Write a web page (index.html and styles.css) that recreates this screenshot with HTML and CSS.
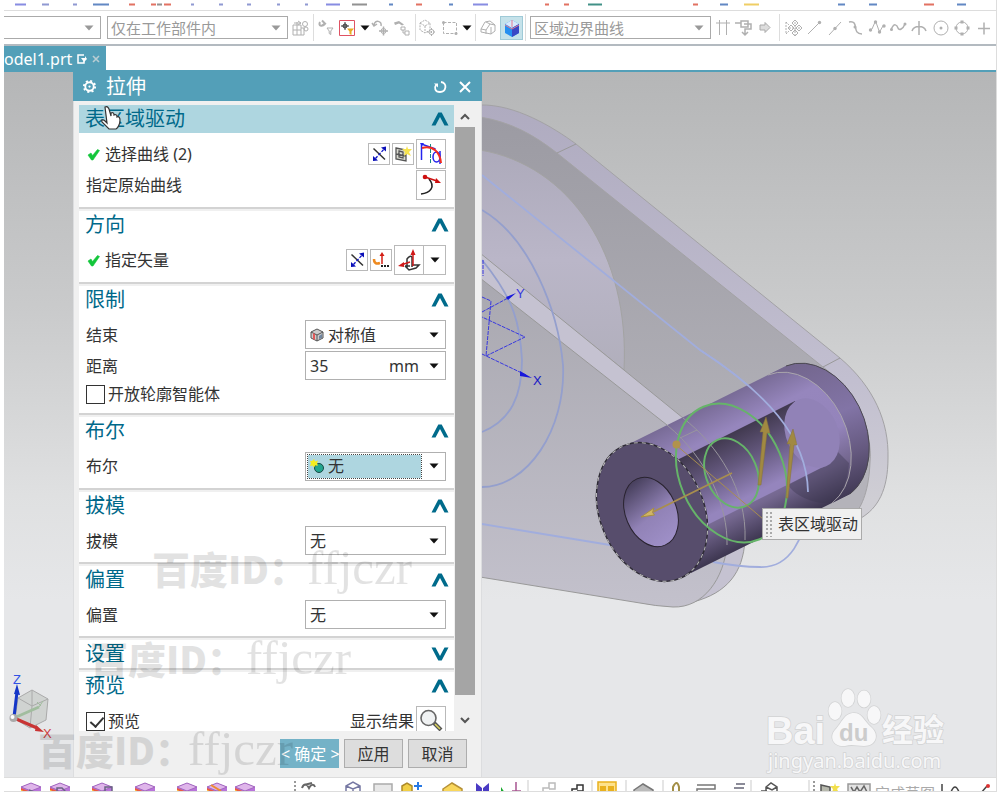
FILE: index.html
```html
<!DOCTYPE html>
<html lang="zh-CN">
<head>
<meta charset="utf-8">
<meta name="viewport" content="width=device-width, initial-scale=1">
<title>model1.prt - 拉伸</title>
<link rel="stylesheet" href="styles.css">
</head>
<body>
<svg width="0" height="0" class="defs" aria-hidden="true">
  <symbol id="down" viewBox="0 0 10 6"><path d="M0.500 0.500h9L5 5.500z" fill="currentColor"/></symbol>
  <symbol id="chev" viewBox="0 0 18 14"><path d="M0.500 13.500L7.300.500h3.400l6.800 13h-4L9 5 4.500 13.500z" fill="#006b8b"/></symbol>
  <symbol id="tick" viewBox="0 0 13 13"><path d="M1 7l3-2L5.500 7.500 10.500 1.500 12.500 2.500 6 12 4.500 12z" fill="#12c63a" stroke="#12c63a" stroke-width=".6"/></symbol>
  <symbol id="reverse" viewBox="0 0 20 20"><path d="M4.500 4.500l11.500 11" stroke="#333" stroke-width="1.500"/><path d="M6.500 14.500l9-10" stroke="#0b10c8" stroke-width="1.300" stroke-dasharray="3 1.500"/><path d="M4 17v-5l5 4.500zM17 2.500v5l-5-4z" fill="#0b10b8"/></symbol>
</svg>
<div class="app">
  <svg class="strip" viewBox="0 0 992 10" preserveAspectRatio="xMinYMin slice" aria-hidden="true">
    <g transform="translate(-4 0)" stroke-width="2" fill="none" opacity=".8">
      <path d="M15 4.500h11M326 4.500h14M473 4.500h15" stroke="#6b70dc"/>
      <path d="M42 4.500h7M73 4.500h4M191 4.500h3M219 4.500h4M247 4.500h4M277 4.500h3M305 4.500h3" stroke="#7580c8"/>
      <path d="M93 4.500h16M389 4.500h4M449 4.500h4M720 4.500h8M838 4.500h7M869 4.500h8M957 4.500h9" stroke="#3b6bb5"/>
      <path d="M129 4.500h6M151 4.500h5M164 4.500h7M416 4.500h6M545 4.500h4M564 4.500h5M693 4.500h5M924 4.500h10" stroke="#db4f3c"/>
      <path d="M157 4.500h5M352 4.500h15" stroke="#777"/><path d="M744 4.500h15" stroke="#ecc33e"/><path d="M588 4.500h14" stroke="#12766a"/>
    </g>
  </svg>
  <div class="toolbar">
    <div class="pick pick-first"><select aria-label="类型过滤器"><option></option></select><svg class="pick-arrow"><use href="#down"/></svg></div>
    <div class="pick pick-wide"><select aria-label="选择范围"><option>仅在工作部件内</option></select><svg class="pick-arrow"><use href="#down"/></svg></div>
    <div class="tools">
      <button class="tool" aria-label="装配范围"><svg viewBox="0 0 20 20"><path d="M3 7h8v10H3zM3 12h8M7 4v13M4 5h7M8 3l3 2-3 2M11 10h3v7h-3" class="g"/><circle cx="15" cy="6" r="2.500" class="g"/><circle cx="16" cy="11" r="2" class="g"/></svg></button>
      <i class="sep"></i>
      <button class="tool" aria-label="重置过滤器"><svg viewBox="0 0 20 20"><path d="M4 4c-2 4 2 5 5 2M6 2.500l3 3-3 2" class="g" stroke-width="2"/><path d="M11 10h6l-2.200 3v3.500l-1.600-1V13z" class="g"/></svg></button>
      <button class="tool" aria-label="点过滤器"><svg viewBox="0 0 20 20"><path d="M2.500 2.500h15v15h-15z" fill="#fff" stroke="#df5263"/><path d="M4 8h8M8 4v8" stroke="#333"/><circle cx="8" cy="8" r="2" fill="none" stroke="#333"/><path d="M10 10.500h7l-2.500 3V17l-2-1v-2.500z" fill="#eaac23"/></svg></button>
      <button class="caret" aria-label="更多过滤器"><svg class="mini"><use href="#down"/></svg></button>
      <button class="tool" aria-label="撤销选择"><svg viewBox="0 0 20 20"><path d="M3 7c1-6 8-4 7 1M1 5l2 3 3-2M8 13h9M12.500 8.500v9" class="g" stroke-width="1.500"/><circle cx="12.500" cy="13" r="2.500" class="g"/></svg></button>
      <button class="tool" aria-label="对象导航"><svg viewBox="0 0 20 20"><path d="M2 4.500l5-1.500 5 3.500-2 1-3-2-4 1.500z" class="gf"/><path d="M9 9h4v3H9zM13 13h4v4h-4zM11 12v3h2" class="g"/></svg></button>
      <i class="sep"></i>
      <button class="tool" aria-label="实体选择"><svg viewBox="0 0 20 20"><path d="M2 5l5-3 5 3v7l-5 3-5-3zl5 3 5-3M7 8v7M9 14h9M13.500 10v8" class="g" stroke-dasharray="2 1"/><circle cx="13.500" cy="14" r="2.500" class="g"/></svg></button>
      <button class="tool" aria-label="矩形选择"><svg viewBox="0 0 20 20"><path d="M4.500 4.500h13v11h-13z" class="g" stroke-dasharray="3 1.500"/><circle cx="4.500" cy="4.500" r="1.500" class="gf"/><circle cx="17" cy="15.500" r="1.500" class="gf"/></svg></button>
      <button class="caret" aria-label="选择方式"><svg class="mini"><use href="#down"/></svg></button>
      <i class="sep"></i>
      <button class="tool" aria-label="隐藏边"><svg viewBox="0 0 20 20"><path d="M3 11l4-7 5-1 5 4v6l-4 3-5-1-5-1zM3 11l5 1 4-6 5 1M8 12v4M12 6l-4-2M13 16V9" class="g"/></svg></button>
      <button class="tool tool-on" aria-label="着色"><svg viewBox="0 0 20 20"><path d="M3 6l7-4 7 4v9l-7 4-7-4z" fill="#258ff0"/><path d="M3 6l7-4 7 4-7 4z" fill="#d9e8fb"/><path d="M10 10l7-4v9l-7 4z" fill="#3a47c5"/><path d="M3 7l7 4 7-4M10 2v7" stroke="#e37b91" fill="none"/></svg></button>
      <i class="sep"></i>
    </div>
    <div class="pick pick-wide"><select aria-label="曲线规则"><option>区域边界曲线</option></select><svg class="pick-arrow"><use href="#down"/></svg></div>
    <div class="tools">
      <button class="tool" aria-label="在相交处停止"><svg viewBox="0 0 20 20"><path d="M3 5h14M6.500 2v15M13.500 2v15" class="g"/></svg></button>
      <button class="tool" aria-label="跟随圆角"><svg viewBox="0 0 20 20"><path d="M1 5h6M7 3h7v6H7zM10 6h7v5h-6v5M8 14l3 3 3-3" class="g" stroke-width="1.500"/></svg></button>
      <button class="tool" aria-label="特征内的链"><svg viewBox="0 0 20 20"><path d="M5 7h5V4.500l5 5-5 5V12H5z" fill="#ddd" stroke="#aaa"/></svg></button>
      <i class="sep sep-wide"></i>
      <button class="tool" aria-label="启用捕捉点"><svg viewBox="0 0 20 20"><path d="M3 4v12M3 4l3 3M3 16l3-3M6 10h13M12 4v13" class="g" stroke-dasharray="2 1"/><path d="M12 2l3 3-3 3-3-3zM12 12l3 3-3 3-3-3zM8 7l3 3-3 3-3-3zM16 7l3 3-3 3-3-3z" class="g"/></svg></button>
      <button class="tool" aria-label="端点"><svg viewBox="0 0 20 20"><path d="M4 16L15 5" class="g"/><circle cx="15.500" cy="4.500" r="1.700" class="gf"/></svg></button>
      <button class="tool" aria-label="中点"><svg viewBox="0 0 20 20"><path d="M4 17L16 4" class="g"/><circle cx="10" cy="10.500" r="1.700" class="gf"/></svg></button>
      <button class="tool" aria-label="控制点"><svg viewBox="0 0 20 20"><path d="M3 4c11-2 2 12 13 12" class="g" stroke-width="1.500"/><circle cx="9" cy="9" r="1.500" class="gf"/></svg></button>
      <button class="tool" aria-label="极点"><svg viewBox="0 0 20 20"><path d="M3 12l2-1 3.500-8 4 11 4-7" class="g"/><circle cx="3.500" cy="12" r="1.700" class="gf"/><circle cx="8.500" cy="4" r="1.700" class="gf"/><circle cx="12.500" cy="14" r="1.700" class="gf"/><circle cx="17" cy="8" r="1.700" class="gf"/></svg></button>
      <button class="tool" aria-label="样条点"><svg viewBox="0 0 20 20"><path d="M3 12c3-8 6-5 7-2s5 1 7-4" class="g" stroke-width="1.500"/><circle cx="3.500" cy="11.500" r="1.500" class="gf"/><circle cx="17" cy="6" r="1.500" class="gf"/></svg></button>
      <button class="tool" aria-label="交点"><svg viewBox="0 0 20 20"><path d="M3 13c2-6 12-6 14 0M10 3v14" class="g" stroke-width="1.500"/></svg></button>
      <button class="tool" aria-label="圆心"><svg viewBox="0 0 20 20"><circle cx="11" cy="10" r="7" class="g"/><circle cx="11" cy="10" r="1.500" class="gf"/></svg></button>
      <button class="tool" aria-label="象限点"><svg viewBox="0 0 20 20"><circle cx="11" cy="10" r="6" class="g"/><path d="M9.500 2.500h3v3h-3zM9.500 14.500h3v3h-3zM3.500 8.500h3v3h-3zM15.500 8.500h3v3h-3z" class="gf"/></svg></button>
      <button class="tool" aria-label="现有点"><svg viewBox="0 0 20 20"><path d="M6 10.500h12M12 4.500v12" class="g" stroke-width="1.500"/></svg></button>
    </div>
  </div>
  <div class="tabs">
    <div class="tab"><span class="tab-name">odel1.prt</span>
      <svg class="tab-icon" viewBox="0 0 10 10"><path d="M7 1H1v8h6V7" fill="none" stroke="#fff" stroke-width="1.500"/><path d="M4 4h4V2l2 3-3 3z" fill="#fff"/></svg>
      <button class="tab-close" aria-label="关闭"><svg viewBox="0 0 8 8"><path d="M1 1l6 6M7 1L1 7" stroke="#b9cdd3" stroke-width="1.600"/></svg></button>
    </div>
  </div>
  <main class="viewport">
    <svg class="scene" viewBox="0 0 992 705" preserveAspectRatio="xMinYMin slice" aria-label="模型视图">
      <defs>
        <linearGradient id="face" gradientUnits="userSpaceOnUse" x1="0" y1="120" x2="0" y2="480"><stop offset="0" stop-color="#9c9ba3"/><stop offset="1" stop-color="#b4b3ba"/></linearGradient>
        <linearGradient id="rim" gradientUnits="userSpaceOnUse" x1="0" y1="105" x2="0" y2="500"><stop offset="0" stop-color="#afabc0"/><stop offset=".7" stop-color="#c2bfd0"/><stop offset="1" stop-color="#cfced4"/></linearGradient>
        <linearGradient id="disc" gradientUnits="userSpaceOnUse" x1="0" y1="150" x2="0" y2="370"><stop offset="0" stop-color="#adaabb"/><stop offset=".5" stop-color="#bab6c8"/><stop offset="1" stop-color="#b1afbc"/></linearGradient>
        <linearGradient id="front" gradientUnits="userSpaceOnUse" x1="0" y1="280" x2="0" y2="607"><stop offset="0" stop-color="#a9a8b0"/><stop offset="1" stop-color="#c3c1cc"/></linearGradient>
        <linearGradient id="tube" gradientUnits="userSpaceOnUse" x1="627" y1="445" x2="691" y2="573"><stop offset="0" stop-color="#786b96"/><stop offset=".22" stop-color="#9686bd"/><stop offset=".55" stop-color="#9484bb"/><stop offset=".78" stop-color="#74678f"/><stop offset="1" stop-color="#3d3650"/></linearGradient>
        <linearGradient id="bore" gradientUnits="userSpaceOnUse" x1="677" y1="460" x2="711" y2="528"><stop offset="0" stop-color="#41394f"/><stop offset=".4" stop-color="#65597f"/><stop offset=".85" stop-color="#9585bd"/><stop offset="1" stop-color="#9585bd"/></linearGradient>
        <linearGradient id="cap" gradientUnits="userSpaceOnUse" x1="800" y1="365" x2="850" y2="500"><stop offset="0" stop-color="#74678f"/><stop offset=".4" stop-color="#8274a6"/><stop offset=".7" stop-color="#65597f"/><stop offset="1" stop-color="#3d3650"/></linearGradient>
        <linearGradient id="hole" gradientUnits="userSpaceOnUse" x1="641" y1="480" x2="660" y2="545"><stop offset="0" stop-color="#4a4260"/><stop offset=".55" stop-color="#9182b6"/><stop offset="1" stop-color="#9e8fc7"/></linearGradient>
      </defs>
      <g transform="translate(-4 -72)" fill="none" stroke-width="1">
        <path d="M480 105C515 104 553 127 576 144L840 358C874 387 889 422 888 458C888 490 878 508 861 518L760 530L480 300z" fill="url(#rim)" stroke="#a3a2a5"/>
        <path d="M480 117C511 122 534 135 557 153L823 367C855 390 873 432 870 462C869 490 862 506 855 514L740 530L480 300z" fill="url(#face)" stroke="#a3a2a5"/>
        <path d="M557 153l19-9M823 367l17-9" stroke="#999"/>
        <path d="M480 150C570 165 630 255 624 370L480 254z" fill="url(#disc)" stroke="#a3a3a3"/>
        <path d="M480 253L683 418C718 445 747 490 745 540C743 573 727 593 693 602L480 300z" fill="#c5c2d1" stroke="#999"/>
        <path d="M480 278L667 425C708 459 728 507 727 545C724 578 704 608 673 607Q655 606 640 603L480 577z" fill="url(#front)" stroke="#999"/>
        <path d="M482 524L610 545M482 175L700 350C765 392 807 436 808 492C807 542 788 568 760 567Q740 567 713 562" stroke="#a1addd" stroke-width="1.800"/>
        <path d="M482 210C530 238 558 310 563 365C566 430 527 487 482 487M482 260C515 300 520 325 522 360C522 396 511 420 482 432" stroke="#949fcd" stroke-width="1.800"/>
        <path d="M627 445L786 366A52 72 -23 0 1 850 494L691 573z" fill="url(#tube)"/>
        <path d="M768 375A52 72 -23 0 1 832 503L850 494A52 72 -23 0 0 786 366z" fill="url(#cap)"/>
        <path d="M768 375A52 72 -23 0 1 832 503" stroke="#aaa6ac"/>
        <path d="M677 460L795 401L823 467L705 526z" fill="url(#bore)"/>
        <path d="M823 467L788 485C793 493 806 501 822 503L832 503C842 494 848 480 849 463L836 450z" fill="#3d3650" opacity=".4"/>
        <ellipse cx="812" cy="433" rx="26" ry="36" transform="rotate(-23 812 433)" fill="#9182b7"/>
        <path d="M786 366A52 72 -23 0 1 850 494" stroke="#4b4950"/>
        <ellipse cx="652" cy="512" rx="52" ry="72" transform="rotate(-23 652 512)" fill="#574d6c" stroke="#2e2b35" stroke-width="1.400"/>
        <ellipse cx="652" cy="512" rx="52" ry="72" transform="rotate(-23 652 512)" stroke="#bbb" stroke-dasharray="4 4"/>
        <ellipse cx="651" cy="512" rx="25.500" ry="36" transform="rotate(-23 651 512)" fill="url(#hole)" stroke="#29232f"/>
        <path d="M667 425C708 459 728 507 727 545M683 418C718 445 747 490 745 540M680 438l17-8" stroke="#99969e"/>
        <path d="M700 350C765 392 807 436 808 492" stroke="#a1addd" stroke-width="1.800"/>
        <g stroke="#66b469" stroke-width="2"><ellipse cx="731.500" cy="473" rx="52" ry="72" transform="rotate(-23 731.500 473)"/><ellipse cx="731.500" cy="473" rx="25.500" ry="36" transform="rotate(-23 731.500 473)"/></g>
        <path d="M676 445l87 74" stroke="#a88e4e"/><path d="M732 473l-79 39" stroke="#a88e4e" stroke-width="1.800"/>
        <circle cx="676.500" cy="444.500" r="4" fill="#b1924c"/><path d="M641 517l13-9-1.500 4.500 2 2.500z" fill="#d0b565" stroke="#a78e42"/>
        <path d="M758 485l5-53h-3l6-15 4 16h-3l-6 52zM786 498l4-54h-3l6-15 4 16h-3l-6 53z" fill="#a18942" stroke="#84703c" stroke-width=".5"/>
        <g stroke="#3838df" stroke-dasharray="4 1"><path d="M482 297l9 4-5 55 39-19-43-20M482 312l26-14M482 354l44 21M483 260v16"/></g>
        <path d="M506 297l10-4-8 7zM520 371l12 7-12-2z" fill="#1717dc"/>
        <g font-family="Liberation Sans, sans-serif" font-size="13" stroke="none"><text x="516" y="298" fill="#3838df">Y</text><text x="533" y="385" fill="#1717c5">X</text><text x="13" y="684" fill="#3152e5">Z</text><text x="43" y="738" fill="#cf3e3e">X</text></g>
        <path d="M32 690l16 9-2 21-16 8-15-9 3-21z" fill="#d0d3d1" stroke="#aaa"/><path d="M18 698l14 8 16-7M32 706l-2 22M32 690v16" stroke="#aaa"/>
        <path d="M14 718l25-11" stroke="#a1bd9e" stroke-width="3"/><path d="M37 702l4 4M43 701l-4 6" stroke="#a1bd9e"/>
        <path d="M14 717l3-25" stroke="#1435c7" stroke-width="3"/><path d="M14 694l3-10 3 11z" fill="#1435c7"/>
        <path d="M14 718l23 10" stroke="#c93434" stroke-width="3"/><path d="M36 725l8 7-9-1z" fill="#c93434"/><circle cx="13.500" cy="718" r="4" fill="#aaa"/><circle cx="12.500" cy="717" r="2" fill="#fff"/>
      </g>
    </svg>
    <section class="dialog" aria-label="拉伸">
      <header class="title">
        <svg class="gear" viewBox="0 0 16 16"><circle cx="8" cy="8" r="4.500" fill="none" stroke="#fff" stroke-width="2"/><circle cx="8" cy="8" r="6" fill="none" stroke="#fff" stroke-width="2" stroke-dasharray="2.200 2.512"/><circle cx="8" cy="8" r="1.200" fill="#fff"/></svg>
        <h1>拉伸</h1>
        <button class="title-btn" aria-label="重置"><svg viewBox="0 0 16 16"><path d="M9 3c7 1 5 10-1 10-5 0-6-4-4-7" fill="none" stroke="#fff" stroke-width="1.800"/><path d="M2 4.500h4v4z" fill="#fff"/></svg></button>
        <button class="title-btn" aria-label="关闭"><svg viewBox="0 0 16 16"><path d="M3 3l10 10M13 3L3 13" stroke="#fff" stroke-width="2"/></svg></button>
      </header>
      <div class="body">
        <div class="groups">
          <section class="group"><h2 class="head head-on">表区域驱动<svg class="fold"><use href="#chev"/></svg></h2>
            <div class="rows rows-tight">
              <div class="row row-big"><svg class="tick"><use href="#tick"/></svg><span class="name">选择曲线 (2)</span>
                <button class="sq" aria-label="反向"><svg><use href="#reverse"/></svg></button>
                <button class="sq" aria-label="绘制截面"><svg viewBox="0 0 20 20"><path d="M3 4l10 2v11L3 15zM6 7l4 1v6l-4-1zM3 10l10 2" fill="#dadbd1" stroke="#555" stroke-width="1.300"/><path d="M14 2l1 3 4 0-3 3 2 4-4-2-3 2 1-4-3-3h4z" fill="#f6e34e"/></svg></button>
                <button class="sq sq-big" aria-label="曲线"><svg viewBox="0 0 28 28"><path d="M4.500 20V4l14 5M23 11v13" stroke="#2424ee" stroke-width="1.500" fill="none"/><ellipse cx="19.500" cy="17" rx="3.500" ry="5" stroke="#2424ee" stroke-width="1.500" fill="none"/><path d="M13.500 4v19" stroke="#168a83" stroke-dasharray="4 1"/><path d="M5 8c11-3 18 4 19 15" fill="none" stroke="#f22b20" stroke-width="2"/><path d="M3 3h4l-2 3z" fill="#2424ee"/></svg></button>
              </div>
              <div class="row row-big"><span class="name">指定原始曲线</span><button class="sq sq-big" aria-label="指定原始曲线"><svg viewBox="0 0 28 28"><path d="M4 23c9-1 15-7 8-15" fill="none" stroke="#222" stroke-width="1.600"/><path d="M8 6l12 4" stroke="#ce1010" stroke-width="1.500"/><circle cx="8" cy="6" r="2.300" fill="#ce1010"/><path d="M19 7l5 5-6 0z" fill="#ce1010"/></svg></button></div>
            </div>
          </section>
          <section class="group"><h2 class="head">方向<svg class="fold"><use href="#chev"/></svg></h2>
            <div class="rows"><div class="row row-big"><svg class="tick"><use href="#tick"/></svg><span class="name">指定矢量</span>
              <button class="sq" aria-label="反向"><svg><use href="#reverse"/></svg></button>
              <button class="sq" aria-label="矢量对话框"><svg viewBox="0 0 20 20"><path d="M11 14V5" stroke="#d41e14" stroke-width="1.500"/><path d="M8.500 6L11 2l2.500 4z" fill="#d41e14"/><path d="M3 9c0 5 3 5 6 4" fill="none" stroke="#ee8a20" stroke-width="2.500"/><path d="M10 16h2M13 16h2M16 16h2" stroke="#222" stroke-width="2"/></svg></button>
              <span class="duo"><button class="duo-main" aria-label="自动判断的矢量"><svg viewBox="0 0 28 28"><path d="M12 22V13q3-4 5-2v10M10 20l4 4 7-2 3-3h-7M10 20h5" fill="none" stroke="#333" stroke-width="1.500"/><path d="M18 20V8M15 16l-9 3" stroke="#d01818" stroke-width="1.500"/><path d="M15.500 9L18 3l2.500 6zM3 20l6-4v5z" fill="#d01818"/></svg></button><button class="duo-arrow" aria-label="矢量类型"><svg class="mini"><use href="#down"/></svg></button></span>
            </div></div>
          </section>
          <section class="group"><h2 class="head">限制<svg class="fold"><use href="#chev"/></svg></h2>
            <div class="rows">
              <div class="row"><label class="name" for="end">结束</label><div class="combo"><svg class="pic" viewBox="0 0 14 14"><path d="M1 4l6-3 6 3v6l-6 3-6-3z" fill="#ccc" stroke="#555"/><path d="M1 4l6 3 6-3M7 7v6" stroke="#555" fill="none"/><path d="M3 5l2 1v6l-2-1z" fill="#e45858"/><path d="M9 8l3-2v4l-3 1z" fill="#7186a0"/></svg><select id="end"><option>对称值</option></select><svg class="mini"><use href="#down"/></svg></div></div>
              <div class="row"><label class="name" for="dist">距离</label><div class="combo"><input id="dist" value="35"><span class="unit">mm</span><button class="combo-btn" aria-label="公式"><svg class="mini"><use href="#down"/></svg></button></div></div>
              <label class="check"><input type="checkbox">开放轮廓智能体</label>
            </div>
          </section>
          <section class="group"><h2 class="head">布尔<svg class="fold"><use href="#chev"/></svg></h2>
            <div class="rows"><div class="row row-big"><label class="name" for="bool">布尔</label><div class="combo"><div class="picked"><svg class="pic" viewBox="0 0 14 14"><circle cx="9" cy="9" r="4.500" fill="#22a58e" stroke="#174b45"/><path d="M4 0l1 2.500 3-1-1 3 1 2-3 0-1 2-1.500-2-2.500.5 1-3-1-2 2 0z" fill="#f6ed20"/></svg><select id="bool"><option>无</option></select></div><svg class="mini"><use href="#down"/></svg></div></div></div>
          </section>
          <section class="group"><h2 class="head">拔模<svg class="fold"><use href="#chev"/></svg></h2>
            <div class="rows"><div class="row"><label class="name" for="draft">拔模</label><div class="combo"><select id="draft"><option>无</option></select><svg class="mini"><use href="#down"/></svg></div></div></div>
          </section>
          <section class="group"><h2 class="head">偏置<svg class="fold"><use href="#chev"/></svg></h2>
            <div class="rows"><div class="row"><label class="name" for="offset">偏置</label><div class="combo"><select id="offset"><option>无</option></select><svg class="mini"><use href="#down"/></svg></div></div></div>
          </section>
          <section class="group"><h2 class="head">设置<svg class="fold fold-shut"><use href="#chev"/></svg></h2></section>
          <section class="group"><h2 class="head">预览<svg class="fold"><use href="#chev"/></svg></h2>
            <div class="rows"><div class="row row-big"><label class="check name"><input type="checkbox" checked>预览</label><span>显示结果</span><button class="sq sq-big" aria-label="显示结果"><svg viewBox="0 0 28 28"><path d="M17 16l7 7" stroke="#555" stroke-width="4"/><path d="M18 17l5 5" stroke="#ddd55c" stroke-width="1.500"/><circle cx="11.500" cy="11" r="7.500" fill="#f0f2f3" stroke="#666" stroke-width="1.600"/></svg></button></div></div>
          </section>
        </div>
        <div class="scroll" aria-hidden="true"><svg class="scroll-end" viewBox="0 0 20 22"><path d="M6 14l4-4 4 4" fill="none" stroke="#555" stroke-width="2"/></svg><div class="thumb"></div><svg class="scroll-end" viewBox="0 0 20 22"><path d="M6 9l4 4 4-4" fill="none" stroke="#555" stroke-width="2"/></svg></div>
      </div>
      <footer class="actions"><button class="act act-ok">&lt; 确定 &gt;</button><button class="act">应用</button><button class="act">取消</button></footer>
    </section>
    <svg class="overlay" viewBox="0 0 992 705" preserveAspectRatio="xMinYMin slice" aria-hidden="true">
      <g transform="translate(-4 -72)">
        <g class="mark"><text x="152" y="584" class="mark-cjk">百度ID：</text><text x="307" y="584" class="mark-id">ffjczr</text>
        <text x="90" y="674" class="mark-cjk">百度ID：</text><text x="246" y="674" class="mark-id">ffjczr</text>
        <text x="38" y="765" class="mark-cjk">百度ID：</text><text x="188" y="765" class="mark-id">ffjczr</text></g>
        <g fill="#f7f7f8" stroke="#d2d3d4" stroke-width="1.500" paint-order="stroke">
          <text x="766" y="744" class="logo-latin">Bai</text>
          <ellipse cx="835" cy="711" rx="6.500" ry="9"/><ellipse cx="848" cy="698" rx="6.500" ry="9"/><ellipse cx="864" cy="699" rx="6.500" ry="8.500"/><ellipse cx="874" cy="715" rx="6.500" ry="9"/>
          <path d="M854 713C862 713 864 721 871 727C880 735 876 746 864 746C857 746 852 744 845 746C833 747 829 737 835 730C842 723 844 713 854 713z"/>
          <text x="882" y="741" class="logo-cjk">经验</text><text x="768" y="768" class="logo-url">jingyan.baidu.com</text>
        </g>
        <text x="839" y="741" class="logo-du">du</text>
        <path d="M107 107c2-1 3 0 4 2l2 7v-3c2-1 3 0 3 2 2-1 3 0 3 2 2-1 3 1 3 3 0 4-2 8-4 9h-7l-7-7c-1-2 1-3 3-1l2 2z" transform="translate(-2 0)" fill="#fff" stroke="#333" stroke-width="1.200"/>
      </g>
    </svg>
    <div class="tip"><i class="grip"></i>表区域驱动</div>
  </main>
  <svg class="dock" viewBox="0 0 992 15" preserveAspectRatio="xMinYMin slice" aria-hidden="true">
    <defs><g id="brick"><path d="M0 5l10-4 10 4v12H0z" fill="#b873da"/><path d="M0 5l10-4 10 4-10 4z" fill="#dfb5ea" stroke="#a267bf" stroke-width="1"/><path d="M0 6l10 4v6H0z" fill="#ed5a3e"/><path d="M0 8l7 3v5H0z" fill="#ffe342"/></g></defs>
    <g transform="translate(-4 1)" fill="none" stroke-width="1.500">
      <use href="#brick" x="21" y="3"/><use href="#brick" x="50" y="3"/><use href="#brick" x="92" y="3"/><use href="#brick" x="135" y="3"/><use href="#brick" x="177" y="3"/><use href="#brick" x="207" y="3"/><use href="#brick" x="235" y="3"/>
      <path d="M57 14V9h5l3 3v4M105 14V8h7v6M29 11l8 3" stroke="#6a6284"/><path d="M211 6l10 6" stroke="#ee8a30" stroke-width="2"/>
      <path d="M295 2v12M814 2v12" stroke="#999" stroke-width="2" stroke-dasharray="2 2"/>
      <path d="M302 9c2-5 5-4 7 0 2-4 5-4 6-1M304 6l8-2" stroke="#666" stroke-width="2"/>
      <path d="M346 14V7l7-4 7 4v7M346 7l7 3 7-3M353 10v4" stroke="#7678a3"/><path d="M374 5h18v9h-18z" fill="#e8e8e8" stroke="#aaa"/>
      <path d="M402 7l5-3 5 3v8h-10z" fill="#f1cf45" stroke="#ad8a28"/><path d="M418 3v8M414 7h8" stroke="#2879e4" stroke-width="2"/>
      <path d="M443 10l9-6 10 6v5h-19z" fill="#f9d75c" stroke="#b69136"/><path d="M476 4l6 5v5h-6zM489 4l-6 5v5h6z" fill="#4a3bc4"/><path d="M501 8l4 6h-4z" fill="#16a82b"/><path d="M516 3v10M512 12h9" stroke="#a85591"/>
      <path d="M543 14V9h6V4h6v6h-6" stroke="#bbb"/><path d="M572 13v-3h5V6h6v6h-6" stroke="#333"/><path d="M598 3h18v13h-18z" fill="#fde28c" stroke="#e9b11e"/><path d="M600 7h6v7h-6zM608 7h6v7h-6z" fill="#e9b11e"/>
      <path d="M634 11l9-6 10 6v5h-19z" fill="#bbb" stroke="#777"/><path d="M673 15V8q4-8 6 0v7" stroke="#a38f47" stroke-width="2"/><path d="M697 6h18v4h-18v4" stroke="#777"/><path d="M736 5h9M734 9h10M732 13h10" stroke="#667"/>
      <path d="M528 1v14M592 1v14M626 1v14M663 1v14M751 1v14M809 1v14" stroke="#ddd"/>
      <path d="M766 15V8l5-4 6 4v7M766 8l6 3 5-3M761 12h6" stroke="#555"/>
      <path d="M821 6l9 2v7h-9z" fill="#b7b9ad" stroke="#555"/><path d="M835 4l1 3 4 0-3 3 2 4h-7l1-4-3-3h4z" fill="#f2df4c"/><path d="M848 5h22v10h-22z" fill="#e3e3e3" stroke="#999"/><path d="M851 8l3 5 3-5 3 5 4-6 3 6" stroke="#666"/>
      <path d="M942 5v10M951 13q4-10 8 0M981 14l6-7" stroke="#444"/><circle cx="988" cy="7" r="2" fill="#d33"/>
      <text x="875" y="20" class="dock-text">完成草图</text>
    </g>
  </svg>
</div>
</body>
</html>
```
FILE: styles.css
```css
* { box-sizing: border-box; }
body { margin: 0; background: #fff; color: #333; font: 16px/22px "Noto Sans", "Noto Sans CJK SC", sans-serif; }
button, select, input { font: inherit; color: inherit; margin: 0; padding: 0; border: 0; background: none; border-radius: 0; }
select { appearance: none; outline: 0; }
svg { display: block; flex: none; }
.defs { position: absolute; }
.app { display: flex; flex-direction: column; min-height: calc(100vh - 4px); margin: 0 3px 4px 4px; border-right: 1px solid #ddd; border-bottom: 1px solid #ddd; }
.strip { width: 100%; height: 10px; }

.toolbar { display: flex; align-items: center; height: 36px; border-top: 1px solid #ddd; border-bottom: 2px solid #b3bac0; overflow: hidden; }
.pick { display: flex; align-items: center; flex: none; height: 23px; border: 1px solid #aaa; padding: 0 6px 0 3px; color: #999; font-size: 15px; }
.pick-first { width: 97px; border-left: 0; margin-right: 6px; }
.pick-wide { width: 181px; }
.pick select { flex: 1; min-width: 0; height: 21px; }
.pick-arrow { width: 10px; height: 6px; }
.tools { display: flex; align-items: center; margin: 0 2px; }
.tool { width: 21px; height: 24px; }
.tool svg { width: 20px; height: 20px; }
.tool-on { width: 23px; margin-left: 1px; padding-left: 1px; background: #c5e2ea; border: 1px solid #9fcad7; }
.caret { display: flex; justify-content: center; width: 13px; color: #222; }
.mini { width: 10px; height: 6px; color: #111; }
.sep { width: 1px; height: 27px; margin: 0 2px; background: #ddd; }
.sep-wide { margin: 0 3px; }
.g { fill: none; stroke: #b0b0b0; }
.gf { fill: #b0b0b0; stroke: none; }

.tabs { display: flex; height: 26px; border-bottom: 2px solid #539fb8; }
.tab { display: flex; align-items: center; width: 102px; height: 26px; background: #539fb8; color: #fff; }
.tab-name { flex: 1; }
.tab-icon { width: 10px; height: 10px; margin-right: 5px; }
.tab-close { width: 8px; margin-right: 6px; }
.tab-close svg { width: 8px; height: 8px; }

.viewport { position: relative; display: flex; flex: 1; min-height: 705px; overflow: hidden; background: linear-gradient(#b5b6b7, #c9cacb 33%, #dfe0e1 60%, #e6e7e9 75%, #e6e7e9); }
.scene, .overlay { position: absolute; inset: 0; width: 100%; height: 100%; }
.overlay { pointer-events: none; }
.dialog { position: relative; display: flex; flex-direction: column; width: 409px; margin-left: 69px; background: #f0f0f0; border: solid #dcdddf; border-width: 0 1px; }
.title { display: flex; align-items: center; gap: 9px; height: 29px; margin: 0 -1px; padding: 0 9px; background: #539fb8; color: #fff; }
.title h1 { flex: 1; margin: 0; font-size: 20px; line-height: 28px; font-weight: 400; }
.gear { width: 15px; height: 15px; }
.title-btn, .title-btn svg { width: 16px; height: 16px; }
.body { display: flex; flex: 1; min-height: 0; padding: 4px 6px 0 5px; }
.groups { flex: 1; height: 626px; overflow: hidden; }
.group { margin-bottom: 2px; border-bottom: 2px solid #d3d3d3; background: #fff; }
.head { display: flex; align-items: center; justify-content: space-between; height: 28px; margin: 0; padding: 0 5px 0 6px; color: #00698a; font-size: 20px; line-height: 28px; font-weight: 400; }
.head-on { background: #aed6e0; }
.fold { width: 18px; height: 14px; }
.fold-shut { transform: rotate(180deg); }
.rows { display: flex; flex-direction: column; gap: 2px; padding: 6px 8px 7px 7px; }
.rows-tight { gap: 1px; }
.row { display: flex; align-items: center; gap: 2px; height: 29px; }
.row-big { height: 30px; }
.name { flex: 1; }
.tick { width: 13px; height: 13px; margin: 0 3px 0 1px; }
.sq { display: flex; align-items: center; justify-content: center; width: 22px; height: 22px; border: 1px solid #b9b9b9; background: #fff; }
.sq svg { width: 20px; height: 20px; }
.sq-big { width: 30px; height: 30px; }
.sq-big svg { width: 28px; height: 28px; }
.duo { display: flex; width: 52px; height: 30px; border: 1px solid #b9b9b9; }
.duo-main { width: 29px; border-right: 1px solid #b9b9b9; }
.duo-main svg { width: 28px; height: 28px; }
.duo-arrow { display: flex; flex: 1; align-items: center; justify-content: center; }
.combo { display: flex; align-items: center; width: 141px; height: 29px; padding: 0 6px 0 4px; border: 1px solid #b0b0b0; background: #fff; }
.combo select, .combo input { flex: 1; min-width: 0; width: 0; height: 25px; outline: 0; }
.pic { width: 14px; height: 14px; margin-right: 4px; }
.picked { display: flex; flex: 1; align-items: center; height: 23px; margin: 0 8px 0 -2px; padding-left: 2px; background: #aed6e0; outline: 1px dotted #444; }
.picked select { height: 23px; }
.unit { margin-right: 10px; }
.check { display: flex; align-items: center; gap: 3px; height: 24px; }
.check input { appearance: none; position: relative; width: 19px; height: 19px; border: 1px solid #333; background: #fff; }
.check input:checked::after { content: ""; position: absolute; left: 6px; top: 1px; width: 6px; height: 11px; border: solid #333; border-width: 0 2px 2px 0; transform: rotate(42deg); }
.scroll { display: flex; flex-direction: column; width: 21px; height: 626px; padding-left: 1px; }
.scroll-end { width: 20px; height: 22px; }
.thumb { flex: 1; margin-bottom: 14px; background: #a5a5a5; }
.actions { display: flex; justify-content: flex-end; gap: 5px; padding: 8px 14px 9px; }
.act { width: 59px; height: 29px; border: 1px solid #adadad; background: #ddd; white-space: nowrap; }
.act-ok { border-color: #74b2c7; background: #74b2c7; color: #fff; }
.tip { position: absolute; left: 758px; top: 436px; display: flex; align-items: center; gap: 6px; height: 32px; padding: 0 3px; border: 1px solid #aaa; background: #f0f0f0; }
.grip { width: 6px; height: 25px; background: radial-gradient(circle at 1px 1px, #aaa 1px, transparent 1px) 0 0 / 4px 4px; }

.mark { fill: #000; opacity: .11; }
.mark-cjk { font: 900 38px "Noto Sans CJK SC", sans-serif; }
.mark-id { font: 49px "Liberation Serif", serif; }
.logo-latin { font: 700 38px "Liberation Sans", sans-serif; }
.logo-cjk { font: 700 31px "Noto Sans CJK SC", sans-serif; }
.logo-url { font: 20px "Noto Sans", sans-serif; }
.logo-du { font: 700 24px "Liberation Sans", sans-serif; fill: #ccc; }
.dock { width: 100%; height: 14px; border-top: 1px solid #ddd; }
.dock-text { font: 15px "Noto Sans CJK SC", sans-serif; fill: #aaa; }
```
